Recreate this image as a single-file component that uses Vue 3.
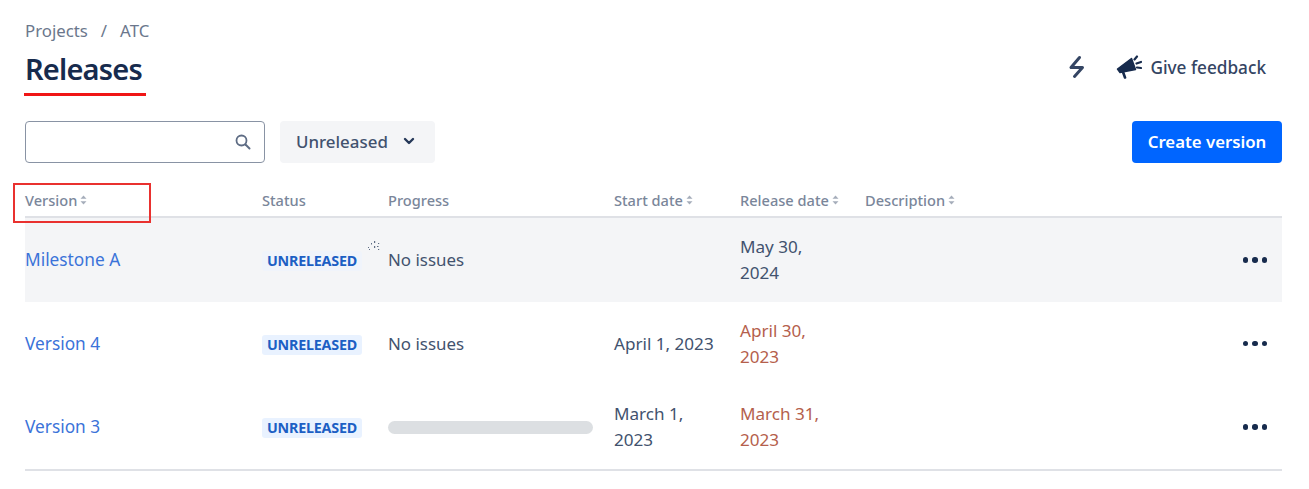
<script setup>
const rows = [
  { name: 'Milestone A', progress: 'none', start: [], release: ['May 30,', '2024'], late: false, hover: true },
  { name: 'Version 4', progress: 'none', start: ['April 1, 2023'], release: ['April 30,', '2023'], late: true },
  { name: 'Version 3', progress: 'bar', start: ['March 1,', '2023'], release: ['March 31,', '2023'], late: true },
]
const heads = [
  { label: 'Version', sort: true },
  { label: 'Status' },
  { label: 'Progress' },
  { label: 'Start date', sort: true },
  { label: 'Release date', sort: true },
  { label: 'Description', sort: true },
]
</script>

<template>
  <div class="page">
    <header class="top">
      <div>
        <nav class="crumbs"><span>Projects</span><span class="sep">/</span><span>ATC</span></nav>
        <h1 class="title">Releases</h1>
      </div>
      <div class="actions">
        <svg class="bolt" width="18" height="24" viewBox="0 0 18 24">
          <path d="M11.5 2.5 L3 12.5 H14.5 L6.5 21.5" fill="none" stroke="#344563" stroke-width="3" stroke-linecap="round" stroke-linejoin="round"/>
        </svg>
        <button class="feedback">
          <svg width="26" height="24" viewBox="0 0 26 24">
            <path d="M1.5 14 L15.5 3.5 L19.5 14.5 L4 17.5 Z" fill="#172b4d" stroke="#172b4d" stroke-width="1.5" stroke-linejoin="round"/>
            <path d="M7 17 L9 22.5" stroke="#172b4d" stroke-width="2.6" stroke-linecap="round"/>
            <path d="M18.5 4.5 L21 1.5 M20.5 8.5 L25 7 M21 12.5 L25 13" stroke="#172b4d" stroke-width="2.2" stroke-linecap="round"/>
          </svg>
          <span>Give feedback</span>
        </button>
      </div>
    </header>

    <div class="toolbar">
      <div class="search">
        <svg width="18" height="18" viewBox="0 0 18 18">
          <circle cx="7.5" cy="7.5" r="5" fill="none" stroke="#5e6c84" stroke-width="1.8"/>
          <path d="M11.5 11.5 L15.5 15.5" stroke="#5e6c84" stroke-width="2" stroke-linecap="round"/>
        </svg>
      </div>
      <button class="select">
        <span>Unreleased</span>
        <svg width="12" height="8" viewBox="0 0 12 8"><path d="M2 2 L6 6 L10 2" fill="none" stroke="#253858" stroke-width="2.4" stroke-linecap="round" stroke-linejoin="round"/></svg>
      </button>
      <button class="create">Create version</button>
    </div>

    <div class="table">
      <div class="row head">
        <div v-for="h in heads" :key="h.label" class="th">
          <span>{{ h.label }}</span>
          <svg v-if="h.sort" width="7" height="10" viewBox="0 0 7 10"><path d="M3.5 0.5 L6.5 3.8 H0.5 Z M3.5 9.5 L6.5 6.2 H0.5 Z" fill="#a5adba"/></svg>
        </div>
      </div>
      <div v-for="r in rows" :key="r.name" class="row body" :class="{ hover: r.hover }">
        <a class="link">{{ r.name }}</a>
        <div><span class="lozenge">UNRELEASED</span></div>
        <div>
          <span v-if="r.progress === 'none'">No issues</span>
          <div v-else class="bar"></div>
        </div>
        <div class="date"><div v-for="l in r.start" :key="l">{{ l }}</div></div>
        <div class="date" :class="{ late: r.late }"><div v-for="l in r.release" :key="l">{{ l }}</div></div>
        <div class="more"><i></i><i></i><i></i></div>
      </div>
    </div>

    <div class="mark-line"></div>
    <div class="mark-box"></div>
    <svg class="spinner" width="20" height="20" viewBox="0 0 20 20">
      <g fill="#5e6c84">
        <rect x="10" y="3" width="1.2" height="2"/><rect x="14" y="5" width="1.2" height="1"/>
        <rect x="7" y="5" width="1" height="1.5"/><rect x="10" y="8" width="1.2" height="2"/>
        <rect x="13" y="8" width="1.5" height="1"/><rect x="14" y="11" width="1.2" height="1"/>
        <rect x="4" y="9" width="1" height="1"/><rect x="5" y="11" width="1" height="1"/>
      </g>
    </svg>
  </div>
</template>

<style scoped>
.page {
  position: relative;
  width: 1309px;
  height: 489px;
  box-sizing: border-box;
  padding: 20px 27px 0 25px;
  background: #fff;
  color: #42526e;
  font-family: "Noto Sans", "Open Sans", sans-serif;
  font-size: 16.9px;
  overflow: hidden;
}
.top { display: flex; justify-content: space-between; align-items: flex-start; height: 101px; }
.crumbs { display: flex; gap: 13px; font-size: 16.8px; line-height: 22px; color: #6b778c; }
.title { margin: 7px 0 0; font-size: 29px; line-height: 40px; font-weight: 600; color: #172b4d; letter-spacing: -0.8px; }
.actions { display: flex; align-items: center; margin-top: 35px; margin-right: 16px; }
.bolt { margin-right: 30px; }
.feedback { display: flex; align-items: center; gap: 8px; padding: 0; border: 0; background: none; font: 500 17.2px "Noto Sans", sans-serif; color: #344563; }
.toolbar { display: flex; align-items: stretch; height: 42px; }
.search {
  width: 240px; box-sizing: border-box; border: 1.5px solid #8993a4; border-radius: 4px;
  display: flex; align-items: center; justify-content: flex-end; padding-right: 12px;
}
.select {
  margin-left: 15px; width: 155px; border: 0; border-radius: 4px; background: #f4f5f7; padding: 0 0 2px 16px;
  display: flex; align-items: center; gap: 15px; font: 500 16.9px "Noto Sans", sans-serif; color: #42526e;
}
.create {
  margin-left: auto; width: 150px; border: 0; border-radius: 4px; background: #0065ff; color: #fff;
  font: 600 16.8px "Noto Sans", sans-serif; padding: 0 0 2px;
}
.table { margin-top: 17px; border-bottom: 2px solid #dfe1e6; }
.row { display: grid; grid-template-columns: 237px 126px 226px 126px 125px 1fr; align-items: center; }
.head { height: 38px; padding-top: 3px; box-sizing: border-box; border-bottom: 2px solid #dfe1e6; }
.th { display: flex; align-items: center; gap: 3px; font-size: 14.6px; font-weight: 500; color: #7a869a; }
.body { height: 83.7px; line-height: 26px; }
.hover { background: #f4f5f7; }
.link { color: #3b73d9; font-size: 17.3px; }
.lozenge {
  display: inline-block; background: #e9f2ff; color: #1c5fc4; border-radius: 3px; padding: 0 5px;
  font-size: 14.3px; font-weight: 700; line-height: 20px; letter-spacing: -0.2px;
}
.hover .lozenge { background: #f0f4fb; }
.bar { width: 205px; height: 13px; border-radius: 7px; background: #dcdfe2; }
.date { color: #42526e; font-size: 17.1px; }
.late { color: #b5604c; }
.more { display: flex; justify-content: flex-end; gap: 4px; padding-right: 15px; }
.more i { width: 5.5px; height: 5.5px; border-radius: 50%; background: #172b4d; }
.mark-line { position: absolute; left: 24px; top: 93px; width: 122px; height: 3px; background: #f01616; }
.mark-box { position: absolute; left: 13px; top: 183px; width: 138px; height: 40px; box-sizing: border-box; border: 2px solid #e9312f; }
.spinner { position: absolute; left: 364px; top: 238px; }
</style>
